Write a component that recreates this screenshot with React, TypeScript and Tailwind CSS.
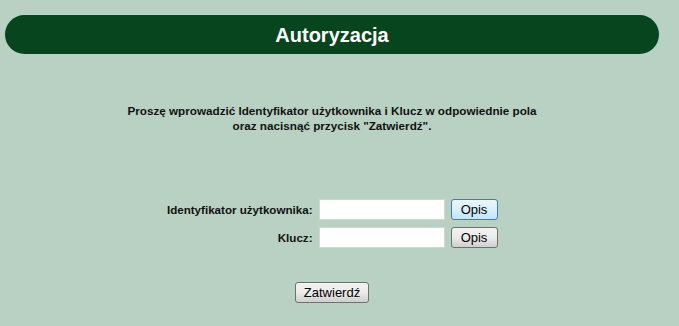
import React from "react";

const btnBase =
  "rounded-[3px] border text-[13px] leading-none text-black px-[9px] flex items-center justify-center";

const grayBtn =
  "border-[#707070] bg-gradient-to-b from-[#f2f2f2] via-[#ebebeb] to-[#cfcfcf]";

const App: React.FC = () => {
  const rows = [
    { label: "Identyfikator użytkownika:", type: "text", focus: true },
    { label: "Klucz:", type: "password", focus: false },
  ];

  return (
    <div className="min-h-[326px] bg-[#b8d1c3] pt-[15px] font-['Liberation_Sans',Arial,sans-serif]">
      <div className="ml-[5px] w-[654px]">
        <div className="h-[39px] rounded-full bg-[#07451f] flex items-center justify-center">
          <h1 className="text-white font-bold text-[20px] leading-none">Autoryzacja</h1>
        </div>

        <p className="mt-[49px] text-center text-[11.7px] leading-[15px] font-bold text-[#111]">
          Proszę wprowadzić Identyfikator użytkownika i Klucz w odpowiednie pola
          <br />
          oraz nacisnąć przycisk "Zatwierdź".
        </p>

        <div className="mt-[66px] flex flex-col items-center gap-[7px]">
          {rows.map((r) => (
            <div key={r.label} className="flex items-center gap-[6px]">
              <label className="w-[146px] flex justify-end whitespace-nowrap text-[11.6px] font-bold text-[#111]">
                {r.label}
              </label>
              <input
                type={r.type}
                className="w-[126px] h-[21px] bg-white border border-[#cfd9d2] outline-none px-1 text-[12px]"
              />
              <button
                className={`${btnBase} w-[47px] h-[21px] ${
                  r.focus
                    ? "border-[#3c7fb1] bg-gradient-to-b from-[#eaf6fd] via-[#d9f0fc] to-[#bee6fd]"
                    : grayBtn
                }`}
              >
                Opis
              </button>
            </div>
          ))}
        </div>

        <div className="mt-[34px] flex justify-center">
          <button className={`${btnBase} w-[74px] h-[21px] ${grayBtn}`}>Zatwierdź</button>
        </div>
      </div>
    </div>
  );
};

export default App;
